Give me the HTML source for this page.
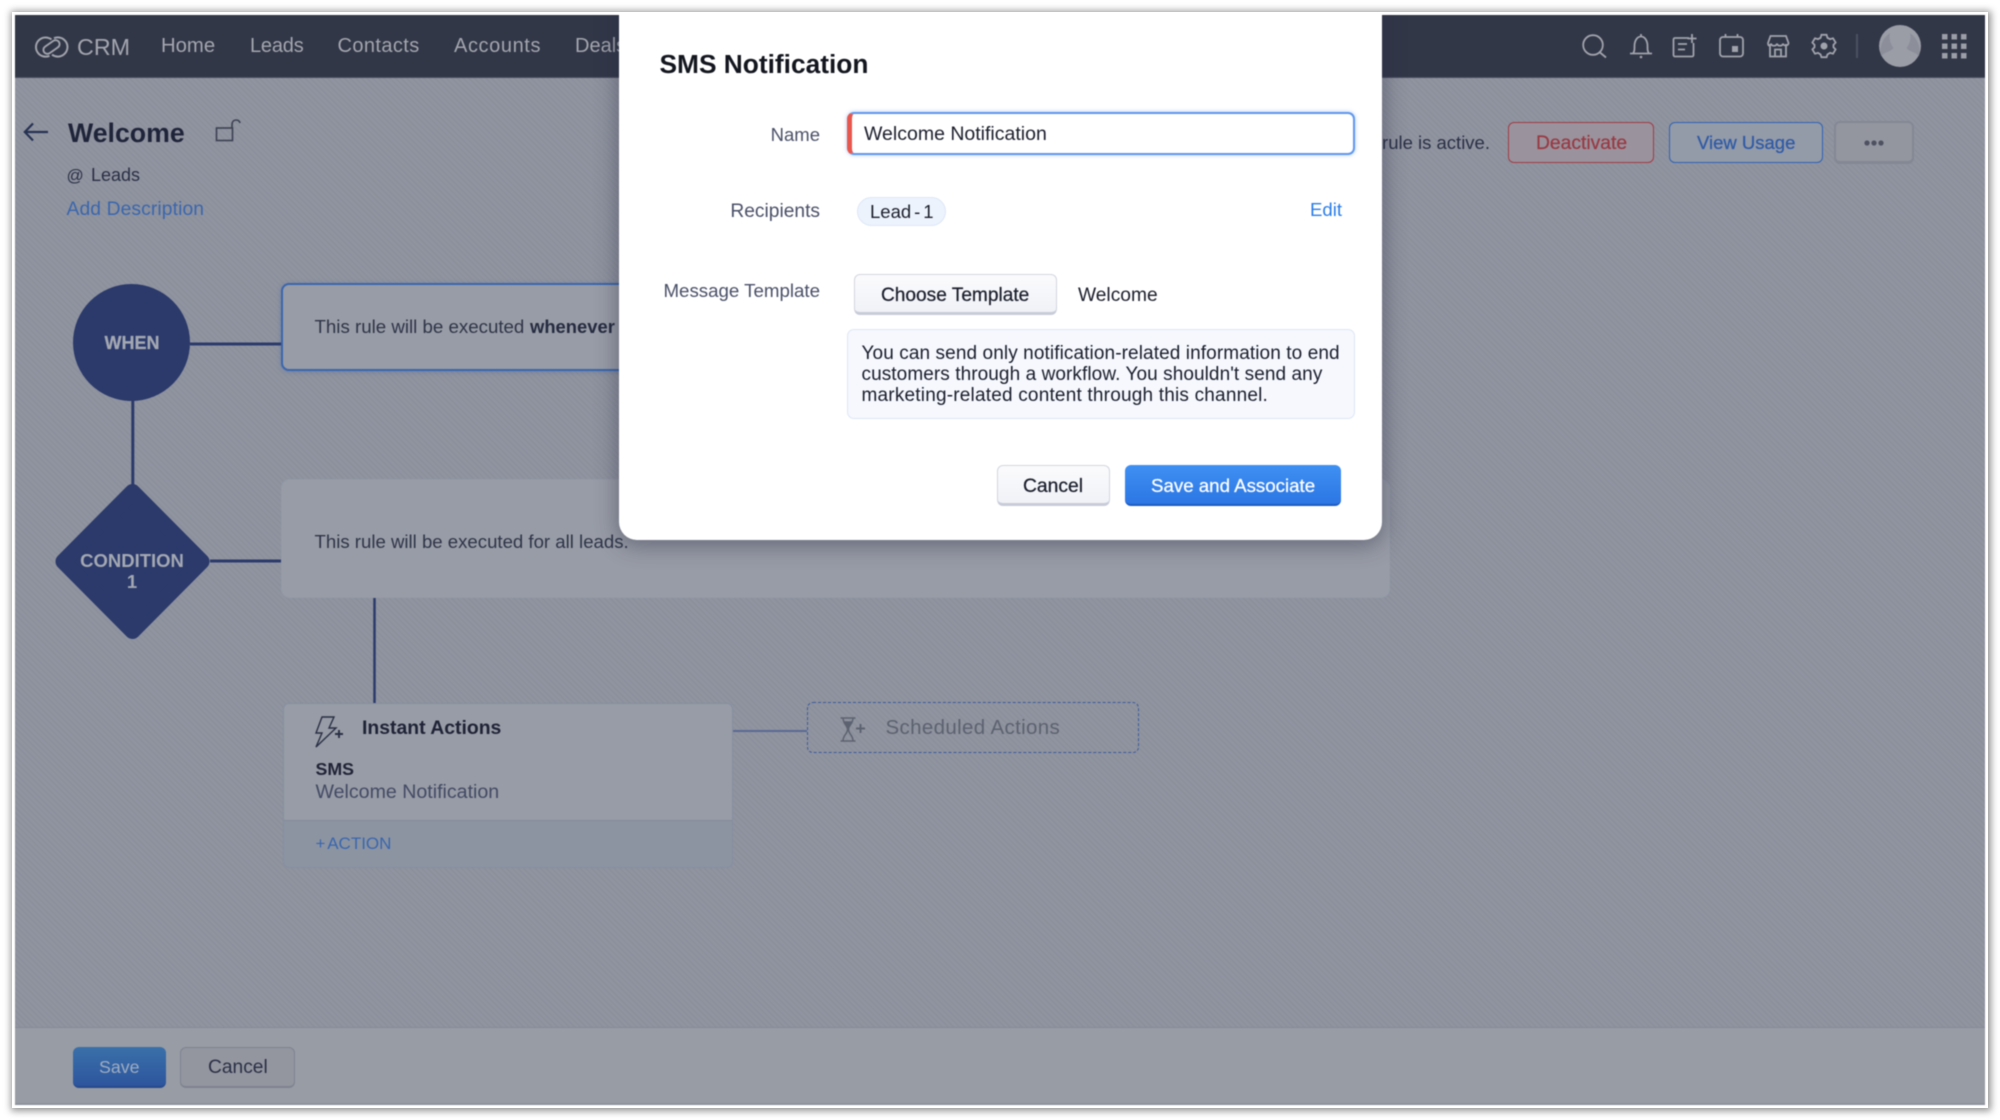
<!DOCTYPE html>
<html lang="en"><head><meta charset="utf-8"><title>SMS Notification</title>
<style>
html,body{margin:0;padding:0;background:#fff}
body{width:2000px;height:1120px;position:relative;overflow:hidden;font-family:"Liberation Sans",sans-serif}
*{box-sizing:border-box}
#frame{position:absolute;left:12px;top:12px;width:1976px;height:1096px;background:#fff;box-shadow:1px 1px 7px 2px rgba(0,0,0,.42)}
#page{position:absolute;left:15px;top:15px;width:1970px;height:1090px;overflow:hidden;background:#8e929e;filter:blur(.45px)}
.abs{position:absolute}
.t{position:absolute;white-space:nowrap;line-height:0;color:#2a2f45}
.m{-webkit-text-stroke:.25px currentColor}
svg{position:absolute;overflow:visible}
</style></head><body>
<div id="frame"></div>
<div id="page">
<div class="abs" style="left:0;top:0;width:1970px;height:1090px;background:repeating-linear-gradient(45deg,rgba(255,255,255,.018) 0 2px,rgba(0,0,0,.012) 2px 4px)"></div>
<div class="abs" style="left:-15px;top:-15px;width:2000px;height:1120px">

<!-- header -->
<div class="abs" style="left:0;top:0;width:2000px;height:77.500px;background:#323748;border-bottom:1px solid #4a4f60"></div>
<svg style="left:0;top:0" width="2000" height="80" fill="none" stroke="#a0a3ab" stroke-width="1.800">
<path d="M51.500 39.500A9.600 9.600 0 1 0 49.500 55.800" stroke-width="2"/>
<path d="M52 54.600A9.600 9.600 0 1 0 54 38.200" stroke-width="2"/>
<rect x="42.500" y="43" width="18" height="8" rx="4" transform="rotate(-35 51.500 47)" stroke-width="1.900"/>
<!-- search -->
<circle cx="1593" cy="45" r="9.800"/><path d="M1600 52.500L1606 57.500"/>
<!-- bell -->
<path d="M1630 53.500h22M1633 53.500c1.500-2 1.500-4 1.500-7.500 0-5 2.500-9.500 6.500-9.500s6.500 4.500 6.500 9.500c0 3.500 0 5.500 1.500 7.500M1641 34v2.500"/><circle cx="1641" cy="57" r="1.300" fill="#a0a3ab" stroke="none"/>
<!-- note plus -->
<path d="M1689 38h-14a1.500 1.500 0 0 0-1.500 1.500v15.500a1.500 1.500 0 0 0 1.500 1.500h17a1.500 1.500 0 0 0 1.500-1.500v-12M1678 44h9M1678 49.500h7M1692 34v9M1687.500 38.500h9"/>
<!-- calendar -->
<rect x="1720" y="37" width="23" height="19.500" rx="3"/><path d="M1725.500 34v3M1737.500 34v3"/><rect x="1732" y="46" width="6" height="6" fill="#a0a3ab" stroke="none"/>
<!-- store -->
<path d="M1770 44v12.500h16V44M1768 43l2.500-7h15.500l2.500 7c0 3-5 3.500-5.500.5-.5 3-5.500 3-6 0-.5 3-5.500 3-6 0-.5 3-3 3-3-.5zM1775 56.500v-7h6v7"/>
<!-- gear -->
<path d="M1821 34.500h6l1 3.500 3 1.500 3.500-1 3 5-2.500 2.700v2.800l2.500 2.500-3 5-3.500-1-3 1.800-1 3.200h-6l-1-3.200-3-1.800-3.500 1-3-5 2.500-2.500v-2.800l-2.500-2.700 3-5 3.500 1 3-1.500z" transform="translate(1824 46) scale(.86) translate(-1824 -47.500)" stroke-width="2.100"/>
<circle cx="1824" cy="46" r="3.500" fill="#a0a3ab" stroke="none"/>
<path d="M1857 34v24" stroke="#4b5062" stroke-width="2"/>
<!-- grid -->
<g fill="#9b9ea6" stroke="none">
<rect x="1942" y="34" width="5.500" height="5.500"/><rect x="1951.500" y="34" width="5.500" height="5.500"/><rect x="1961" y="34" width="5.500" height="5.500"/>
<rect x="1942" y="43.500" width="5.500" height="5.500"/><rect x="1951.500" y="43.500" width="5.500" height="5.500"/><rect x="1961" y="43.500" width="5.500" height="5.500"/>
<rect x="1942" y="53" width="5.500" height="5.500"/><rect x="1951.500" y="53" width="5.500" height="5.500"/><rect x="1961" y="53" width="5.500" height="5.500"/>
</g>
<!-- avatar -->
<circle cx="1900" cy="46" r="21" fill="#9a9da6" stroke="none"/>
<path d="M1881.500 56c2.500-4 10-4.500 12-8-3-4-4-8-4-12 0-1 .3-2 .7-3a21 21 0 0 0-9 23zM1918.500 56c-2.500-4-10-4.500-12-8 3-4 4-8 4-12 0-1-.3-2-.7-3a21 21 0 0 1 9 23z" fill="#8c8f9a" stroke="none"/>
</svg>
<div class="t" style="left:77px;top:47px;font-size:23.300px;color:#a3a6ae">CRM</div>
<div class="t" style="left:161px;top:46px;font-size:20.300px;color:#a3a6ae">Home</div>
<div class="t" style="left:250px;top:46px;font-size:20px;color:#a3a6ae;letter-spacing:-.2px">Leads</div>
<div class="t" style="left:337.500px;top:46px;font-size:20px;color:#a3a6ae;letter-spacing:.4px">Contacts</div>
<div class="t" style="left:454px;top:46px;font-size:20px;color:#a3a6ae;letter-spacing:.6px">Accounts</div>
<div class="t" style="left:575px;top:46px;font-size:20px;color:#a3a6ae">Deals</div>

<!-- title row -->
<svg style="left:0;top:0" width="300" height="160" fill="none" stroke="#263252" stroke-width="2.200">
<path d="M25 132h23M33 123.500L24.800 132l8.200 8.500"/>
<g stroke="#3c4152" stroke-width="1.600"><rect x="216.500" y="128" width="16" height="12.500"/><path d="M232 128v-3c0-3.500 2-5 4-5s3.500 1 4 3"/></g>
</svg>
<div class="t" style="left:68px;top:133px;font-size:26.700px;font-weight:700;color:#20243a">Welcome</div>
<div class="t" style="left:66.500px;top:175.500px;font-size:17px;color:#2a2f45">@</div>
<div class="t" style="left:91px;top:175px;font-size:18px;color:#2a2f45">Leads</div>
<div class="t" style="left:66.500px;top:210px;font-size:19.300px;letter-spacing:.1px;color:#3a66ad">Add Description</div>

<div class="t" style="right:510px;top:143px;font-size:18.500px;color:#2a2f45">rule is active.</div>
<div class="abs" style="left:1508px;top:122px;width:146px;height:41px;border:1.500px solid #a03c46;border-radius:6px;background:#9a929c"></div>
<div class="t m" style="left:1536px;top:143.500px;font-size:19.300px;color:#983a44">Deactivate</div>
<div class="abs" style="left:1669px;top:122px;width:154px;height:41px;border:1.500px solid #2f63b5;border-radius:6px;background:#939aa8"></div>
<div class="t m" style="left:1697px;top:143px;font-size:18.500px;color:#2f5aa5">View Usage</div>
<div class="abs" style="left:1834px;top:121px;width:80px;height:43px;border:2px solid #848894;border-bottom-width:3px;border-radius:6px;background:#93969f"></div>
<svg style="left:0;top:0" width="2000" height="170" fill="#4d5160"><circle cx="1867" cy="143" r="2.600"/><circle cx="1874" cy="143" r="2.600"/><circle cx="1881" cy="143" r="2.600"/></svg>

<!-- rule flow -->
<div class="abs" style="left:281px;top:283px;width:400px;height:88px;background:#989ca6;border:2px solid #3a66ad;border-radius:8px;box-shadow:0 1px 4px rgba(50,90,170,.35)"></div>
<div class="abs" style="left:281px;top:479px;width:1109px;height:119px;background:#989ca6;border:1px solid #939aa9;border-radius:9px"></div>
<svg style="left:0;top:0" width="2000" height="1120" fill="none">
<path d="M190 344h91M132.800 400v86M210 561h71" stroke="#2b3a6b" stroke-width="3"/>
<path d="M374.500 598v105" stroke="#2b3a6b" stroke-width="2.500"/>
<circle cx="131.500" cy="342.500" r="58.500" fill="#2b3a6b"/>
<polygon points="132.500,492 201.500,561.500 132.500,631 63.500,561.500" fill="#2b3a6b" stroke="#2b3a6b" stroke-width="16" stroke-linejoin="round"/>
</svg>
<div class="t m" style="left:132px;top:343px;font-size:18px;font-weight:700;color:#a4a8b2;transform:translateX(-50%)">WHEN</div>
<div class="t" style="left:132px;top:561px;font-size:18.500px;font-weight:700;color:#a4a8b2;transform:translateX(-50%)">CONDITION</div>
<div class="t" style="left:132px;top:582px;font-size:18.500px;font-weight:700;color:#a4a8b2;transform:translateX(-50%)">1</div>
<div class="t" style="left:314.500px;top:327px;font-size:18.700px;color:#2f3448">This rule will be executed <b style="font-size:18.400px;color:#262b40;margin-left:.5px">whenever</b></div>
<div class="t" style="left:314.500px;top:542px;font-size:18.600px;color:#2f3448">This rule will be executed for all leads.</div>

<!-- actions card -->
<div class="abs" style="left:283px;top:702.500px;width:450px;height:165px;background:#8c94a2;border:1.500px solid #868fa0;border-radius:6px;overflow:hidden"><div style="height:117.500px;background:#989ca6;border-bottom:1.500px solid #838b9b"></div></div>
<svg style="left:0;top:0" width="2000" height="1120" fill="none" stroke="#2a2f45" stroke-width="1.400">
<path d="M322 717h12l-5 11h7l-20 19 6-14h-6z"/>
<path d="M335 734h8M339 730v8" stroke-width="1.900"/>
<path d="M733 731h74" stroke="#5a6a94" stroke-width="2"/>
<g stroke="#5d6270" stroke-width="1.500"><path d="M840.500 718h15M840.500 741h15M843 718c0 6 4.500 7 4.500 11.500s-4.500 5.500-4.500 11.500M853 718c0 6-4.500 7-4.500 11.500s4.500 5.500 4.500 11.500"/><path d="M844.500 722h7l-3.500 5z" fill="#5d6270"/><path d="M856 728.500h9M860.500 724v9" stroke-width="1.900"/></g>
</svg>
<div class="abs" style="left:807px;top:702px;width:332px;height:51px;border:1.500px dashed #3a5a9a;border-radius:6px"></div>
<div class="t" style="left:362px;top:728px;font-size:19.400px;color:#1f2336;font-weight:700">Instant Actions</div>
<div class="t" style="left:315.500px;top:769px;font-size:17.800px;font-weight:700;color:#1f2336">SMS</div>
<div class="t" style="left:315.500px;top:792px;font-size:19.600px;color:#434a64">Welcome Notification</div>
<div class="t" style="left:315.500px;top:844px;font-size:17px;word-spacing:-2px;color:#3a66ad">+ ACTION</div>
<div class="t" style="left:885.500px;top:728px;font-size:20.500px;letter-spacing:.35px;color:#5d6270">Scheduled Actions</div>

<!-- footer -->
<div class="abs" style="left:0;top:1027px;width:2000px;height:78px;background:#989ca4;border-top:1px solid #868a97;border-bottom:2px solid #8d919b"></div>
<div class="abs" style="left:73px;top:1047px;width:93px;height:41px;border-radius:6px;background:linear-gradient(#3a70a9,#2d559e);border-bottom:2px solid #284a8c"></div>
<div class="t" style="left:99px;top:1067px;font-size:17.800px;color:#9fadc2">Save</div>
<div class="abs" style="left:180px;top:1047px;width:115px;height:41px;border-radius:6px;background:#93969f;border:1.500px solid #7f8390;border-bottom-width:2px"></div>
<div class="t" style="left:208px;top:1068px;font-size:19.200px;color:#2a2f45">Cancel</div>

<!-- modal -->
<div class="abs" style="left:619px;top:-20px;width:763px;height:560px;background:#fff;border-radius:18px;box-shadow:0 4px 22px 2px rgba(35,40,65,.42)"></div>
<div class="t" style="left:659.500px;top:63.500px;font-size:26.300px;font-weight:700;color:#14161f">SMS Notification</div>

<div class="t" style="right:1180px;top:135px;font-size:18.500px;color:#4a5068">Name</div>
<div class="abs" style="left:847px;top:112px;width:508px;height:43px;background:#fff;border:2px solid #5f97ee;border-left:5px solid #e8574d;border-radius:7px;box-shadow:0 0 4px rgba(95,150,235,.5)"></div>
<div class="t" style="left:864px;top:134px;font-size:19.500px;color:#1b1e2c">Welcome Notification</div>

<div class="t" style="right:1180px;top:212px;font-size:19.200px;color:#4a5068">Recipients</div>
<div class="abs" style="left:857px;top:197px;width:89px;height:29px;background:#edf3fd;border:1px solid #dde7f7;border-radius:15px"></div>
<div class="t" style="left:870px;top:212px;font-size:18.500px;word-spacing:-2.200px;color:#1b1e2c">Lead - 1</div>
<div class="t" style="left:1310px;top:210px;font-size:18.600px;color:#2a7de8">Edit</div>

<div class="t" style="right:1180px;top:291px;font-size:18.700px;color:#4a5068">Message Template</div>
<div class="abs" style="left:854px;top:274px;width:203px;height:41px;background:linear-gradient(#fbfbfd,#f0f2f7);border:1.500px solid #d3d6df;border-bottom:3px solid #c8ccd8;border-radius:6px"></div>
<div class="t m" style="left:881px;top:295.500px;font-size:19.100px;color:#1b1e2c">Choose Template</div>
<div class="t" style="left:1078px;top:295.500px;font-size:19.200px;color:#1b1e2c">Welcome</div>

<div class="abs" style="left:847px;top:329px;width:508px;height:90px;background:#f6f8fe;border:1.500px solid #dde6f5;border-radius:7px"></div>
<div class="t" style="left:861.500px;top:354px;font-size:19px;letter-spacing:.1px;color:#1b1e2c">You can send only notification-related information to end</div>
<div class="t" style="left:861.500px;top:375px;font-size:19px;letter-spacing:.08px;color:#1b1e2c">customers through a workflow. You shouldn't send any</div>
<div class="t" style="left:861.500px;top:396px;font-size:19px;letter-spacing:.2px;color:#1b1e2c">marketing-related content through this channel.</div>

<div class="abs" style="left:997px;top:465px;width:113px;height:41px;background:linear-gradient(#fbfbfd,#f0f2f7);border:1.500px solid #d3d6df;border-bottom:3px solid #c8ccd8;border-radius:6px"></div>
<div class="t m" style="left:1023px;top:486.500px;font-size:19.300px;color:#1b1e2c">Cancel</div>
<div class="abs" style="left:1125px;top:465px;width:216px;height:41px;background:linear-gradient(#3f90f3,#2c76e4);border-bottom:2px solid #1c5cc2;border-radius:6px"></div>
<div class="t m" style="left:1151px;top:486px;font-size:18.700px;color:#fff">Save and Associate</div>
</div>
</div>
</body></html>
